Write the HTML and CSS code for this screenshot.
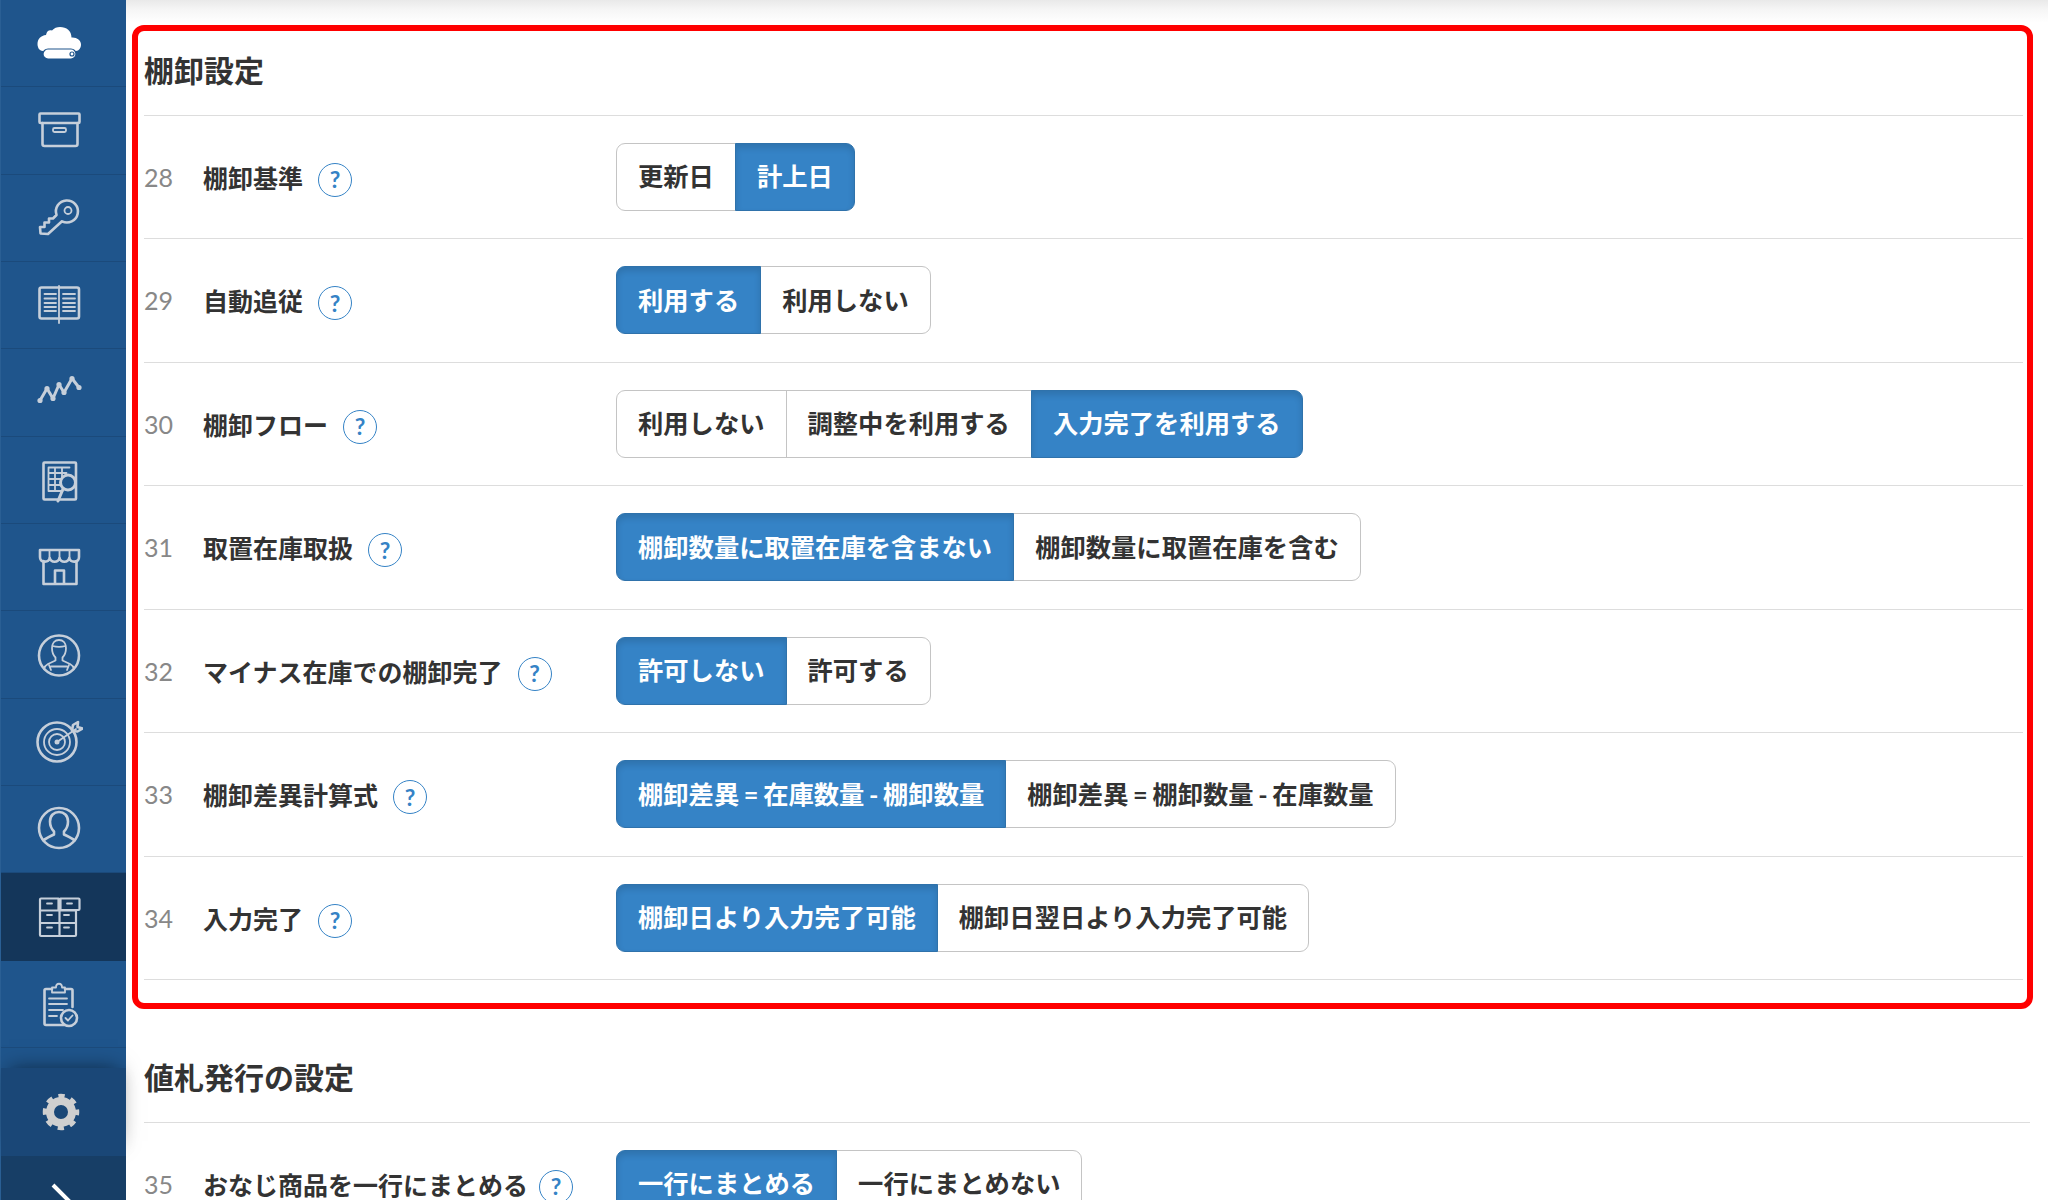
FILE: index.html
```html
<!DOCTYPE html>
<html lang="ja">
<head>
<meta charset="utf-8">
<title>棚卸設定</title>
<link rel="stylesheet" href="styles.css">
</head>
<body>
<div class="app">
  <aside class="sidebar">
    <nav class="nav">
      <a class="nav-item">
        <svg class="ico ico-solid" viewBox="0 0 48 48"><path d="M8 32C4 32 2.500 28 2.500 25c0-5 3.500-8.500 8.500-9 1-4.500 3-5 6-4.500 2-2.500 5-3.500 8-3.500 6.500 0 11.500 4 11.500 10.500 5-.5 9.500 2.500 9.500 7 0 3.500-2 6.500-5 6.500z"/><rect x="8" y="30" width="33" height="10" rx="5" class="pill"/><circle cx="37" cy="35" r="2" class="hole"/></svg>
      </a>
      <a class="nav-item">
        <svg class="ico" viewBox="0 0 48 48"><rect x="4.500" y="6.500" width="40" height="9.500" rx="1"/><path d="M7.500 16v21a2 2 0 0 0 2 2h31a2 2 0 0 0 2-2V16"/><rect x="18" y="21" width="13" height="4" rx="1.500" class="thin"/></svg>
      </a>
      <a class="nav-item">
        <svg class="ico" viewBox="0 0 48 48"><path d="M21.500 21A11 11 0 1 1 27 27.300L13 40l-7.500-.5L5 33h4.500v-4.500H14v-4h4z"/><circle cx="33" cy="16.500" r="3.500" class="thin"/></svg>
      </a>
      <a class="nav-item">
        <svg class="ico" viewBox="0 0 48 48"><rect x="4.500" y="6.500" width="39.500" height="31" rx="2"/><path d="M24 5v37" class="thin"/><path d="M9.500 13H21M9.500 17.500H21M9.500 22H21M9.500 26H21M9.500 30H21M28 13h12M28 17.500h12M28 22h12M28 26h12M28 30h12" class="thin"/></svg>
      </a>
      <a class="nav-item">
        <svg class="ico" viewBox="0 0 48 48"><path d="M5 31.500 12 19.500 18 29.500 24 15.500 29 23.500 37 9.500 44 18.500" class="heavy"/><g class="dots"><circle cx="5" cy="31.500" r="2.600"/><circle cx="12" cy="19.500" r="2.600"/><circle cx="18" cy="29.500" r="2.600"/><circle cx="24" cy="15.500" r="2.600"/><circle cx="29" cy="23.500" r="2.600"/><circle cx="37" cy="9.500" r="2.600"/><circle cx="44" cy="18.500" r="2.600"/></g></svg>
      </a>
      <a class="nav-item">
        <svg class="ico" viewBox="0 0 48 48"><rect x="8.500" y="6.500" width="32.500" height="37" rx="1"/><path d="M13.500 11.500h21M13.500 17h18M13.500 23h14M13.500 29h12M13.500 35h14M13.500 11.500V35M20 11.500V35M27 11.500v12" class="thin"/><circle cx="33" cy="26.500" r="7.500" class="mask heavy"/><path d="M28 33l-5 12" class="heavy"/></svg>
      </a>
      <a class="nav-item">
        <svg class="ico" viewBox="0 0 48 48"><path d="M8.500 18v23h33V18"/><path d="M5 7h39v7c0 6-8.500 6-9.750 1-1.250 5-8.500 5-9.750 0-1.250 5-8.500 5-9.750 0-1.250 5-9.750 5-9.750-1z"/><path d="M14.500 7v8M24.500 7v8M34.500 7v8" class="thin"/><path d="M20 40V27.500h9V40"/></svg>
      </a>
      <a class="nav-item">
        <svg class="ico" viewBox="0 0 48 48"><circle cx="24" cy="24.500" r="20"/><path d="M17 17c0-5 3-8 7-8s7 3 7 8c0 4-2 8-3.500 9.500v3l7.500 3.500c2 1 3.500 3 4 5M17 17c0 4 2 8 3.500 9.500v3L13 33c-2 1-3.500 3-4 5" class="thin"/><path d="M17.500 15c4 1 9 1 13 0M14 34l2 5M34 34l-2 5M16 35.500h16" class="thin"/></svg>
      </a>
      <a class="nav-item">
        <svg class="ico" viewBox="0 0 48 48"><circle cx="22" cy="24" r="19.500"/><circle cx="22" cy="24" r="13" class="thin"/><circle cx="22" cy="24" r="8" class="thin"/><circle cx="22" cy="24" r="2.500" class="fill"/><path d="M22 24 41 11" class="thin"/><path d="M37 13l1-6 5-3-.5 5 5 1.500-5 3z"/></svg>
      </a>
      <a class="nav-item">
        <svg class="ico" viewBox="0 0 48 48"><circle cx="24" cy="23" r="20"/><path d="M8.500 35.500C11 33 15 31.500 19 29.500v-3c-2-2-4-5.500-4-10 0-6 4-9.500 9-9.500s9 3.500 9 9.500c0 4.500-2 8-4 10v3c4 2 8 3.500 10.500 6"/></svg>
      </a>
      <a class="nav-item is-active">
        <svg class="ico ico-fine" viewBox="0 0 48 48"><path d="M5 6.500a1 1 0 0 1 1-1h17.500v12H5zM25.500 5.500h18a1 1 0 0 1 1 1V16a1 1 0 0 1-1 1h-18zM5 17.500h19.500V30H5zM24.500 17.500H41V30H24.500zM5 30h19.500v13H6a1 1 0 0 1-1-1zM24.500 30H41v12a1 1 0 0 1-1 1H24.500z"/><path d="M12 10.500h5M32 10.500h5M12 22h5M29 22h5M12 34.500h5M29 34.500h5" class="thin"/></svg>
      </a>
      <a class="nav-item">
        <svg class="ico" viewBox="0 0 48 48"><path d="M17 9h-6a1.500 1.500 0 0 0-1.500 1.500v33a1.500 1.500 0 0 0 1.500 1.500h19M37.500 27V10.500A1.500 1.500 0 0 0 36 9h-6"/><path d="M17 12.500V7.500h4c0-5 6-5 6 0h3v5z" class="thin"/><path d="M14 18.500h18M14 24h18M14 30h14M14 36h8" class="thin"/><circle cx="34" cy="38" r="8" class="mask"/><path d="M30.500 38l2.500 2.500 4.500-5" class="thin"/></svg>
      </a>
    </nav>
    <div class="sidebar-gap"></div>
    <a class="side-foot">
      <svg class="gear" viewBox="0 0 48 48"><circle cx="26" cy="24" r="11"/><circle cx="26" cy="24" r="15.500" class="teeth"/></svg>
    </a>
    <a class="side-toggle">
      <svg class="chev" viewBox="0 0 48 54"><path d="M18 10 35 27 18 44"/></svg>
    </a>
  </aside>

  <main class="main">
    <div class="topshade"></div>

    <section class="panel panel-marked">
      <h2 class="panel-title">棚卸設定</h2>

      <div class="row">
        <span class="num">28</span>
        <div class="label">棚卸基準<span class="help">?</span></div>
        <div class="btns"><button class="btn">更新日</button><button class="btn on">計上日</button></div>
      </div>
      <div class="row">
        <span class="num">29</span>
        <div class="label">自動追従<span class="help">?</span></div>
        <div class="btns"><button class="btn on">利用する</button><button class="btn">利用しない</button></div>
      </div>
      <div class="row">
        <span class="num">30</span>
        <div class="label">棚卸フロー<span class="help">?</span></div>
        <div class="btns"><button class="btn">利用しない</button><button class="btn">調整中を利用する</button><button class="btn on">入力完了を利用する</button></div>
      </div>
      <div class="row">
        <span class="num">31</span>
        <div class="label">取置在庫取扱<span class="help">?</span></div>
        <div class="btns"><button class="btn on">棚卸数量に取置在庫を含まない</button><button class="btn">棚卸数量に取置在庫を含む</button></div>
      </div>
      <div class="row">
        <span class="num">32</span>
        <div class="label">マイナス在庫での棚卸完了<span class="help">?</span></div>
        <div class="btns"><button class="btn on">許可しない</button><button class="btn">許可する</button></div>
      </div>
      <div class="row">
        <span class="num">33</span>
        <div class="label">棚卸差異計算式<span class="help">?</span></div>
        <div class="btns"><button class="btn on tight">棚卸差異 = 在庫数量 - 棚卸数量</button><button class="btn tight">棚卸差異 = 棚卸数量 - 在庫数量</button></div>
      </div>
      <div class="row">
        <span class="num">34</span>
        <div class="label">入力完了<span class="help">?</span></div>
        <div class="btns"><button class="btn on">棚卸日より入力完了可能</button><button class="btn">棚卸日翌日より入力完了可能</button></div>
      </div>
    </section>

    <section class="panel panel-plain">
      <h2 class="panel-title">値札発行の設定</h2>
      <div class="row">
        <span class="num">35</span>
        <div class="label">おなじ商品を一行にまとめる<span class="help help-near">?</span></div>
        <div class="btns"><button class="btn on">一行にまとめる</button><button class="btn">一行にまとめない</button></div>
      </div>
    </section>
  </main>
</div>
</body>
</html>
```
FILE: styles.css
```css
* { box-sizing: border-box; }

html, body {
  margin: 0;
  height: 1200px;
  overflow: hidden;
  background: #fff;
}

body {
  font-family: Lato, "Noto Sans CJK JP", sans-serif;
  color: #333;
}

.app {
  display: flex;
  height: 1200px;
}

/* Sidebar */
.sidebar {
  position: relative;
  z-index: 1;
  flex: 0 0 126px;
  width: 126px;
  background: #1f558c;
  border-left: 1px solid #2a5f94;
}

.nav {
  display: flex;
  flex-direction: column;
}

.nav-item {
  display: flex;
  align-items: center;
  height: 87.35px;
  padding-left: 34px;
  border-bottom: 1px solid #1b4a7b;
}

.nav-item.is-active {
  background: #14365a;
  border-bottom-color: #14365a;
}

.ico {
  width: 48px;
  height: 48px;
  fill: none;
  stroke: #c6cfda;
  stroke-width: 2.6;
  stroke-linejoin: round;
  stroke-linecap: round;
}

.ico .thin { stroke-width: 1.8; }
.ico .heavy { stroke-width: 3; }
.ico .fill { fill: #c6cfda; stroke: none; }
.ico .dots { fill: #c6cfda; stroke: none; }
.ico .mask { fill: #1f558c; }

.ico-fine { stroke-width: 2.2; }

.ico-solid { fill: #fff; stroke: none; }
.ico-solid .pill { fill: #fff; stroke: #1f558c; stroke-width: 1.2; }
.ico-solid .hole { fill: #fff; stroke: #1f558c; stroke-width: 1.2; }

.sidebar-gap { height: 20px; }

.side-foot {
  display: flex;
  align-items: center;
  height: 88px;
  padding-left: 34px;
  background: #1a4777;
  box-shadow: 0 -7px 20px -8px rgba(0, 0, 0, .5), 6px 0 14px -4px rgba(0, 0, 0, .03);
}

.gear {
  width: 48px;
  height: 48px;
  fill: none;
  stroke: #cfcfcf;
  stroke-width: 8;
}

.gear .teeth {
  stroke-width: 5.5;
  stroke-dasharray: 6.09 6.09;
  stroke-dashoffset: 3.04;
}

.side-toggle {
  display: block;
  height: 86px;
  padding: 19px 0 0 34px;
  background: #173e66;
}

.chev {
  display: block;
  width: 48px;
  height: 54px;
  fill: none;
  stroke: #fff;
  stroke-width: 4;
}

/* Content */
.main {
  flex: 1;
  min-width: 0;
}

.topshade {
  height: 25px;
  background: linear-gradient(#e9e9e9, #f6f6f6 40%, #fff 90%);
}

.panel-marked {
  width: 1901px;
  margin-left: 6px;
  padding: 0 4px 22.500px 6px;
  border: 6px solid #f00;
  border-radius: 12px;
}

.panel-plain {
  width: 1886px;
  margin-left: 18px;
}

.panel-title {
  display: flex;
  align-items: center;
  height: 84.500px;
  margin: 0;
  padding-bottom: 8px;
  font-size: 30px;
  font-weight: 700;
  color: #333;
  border-bottom: 1px solid #ddd;
}

.panel-plain .panel-title {
  height: 114px;
  padding-top: 30px;
}

.row {
  display: flex;
  align-items: center;
  height: 123.5px;
  border-bottom: 1px solid #ddd;
}

.num {
  flex: 0 0 59px;
  font-size: 25px;
  color: #888;
}

.label {
  display: flex;
  align-items: center;
  flex: 0 0 413px;
  font-size: 25px;
  font-weight: 700;
  color: #333;
}

.help {
  display: inline-flex;
  align-items: center;
  justify-content: center;
  width: 34px;
  height: 34px;
  margin: 6px 0 0 15px;
  border: 1.3px solid #3583c6;
  border-radius: 50%;
  font-size: 23px;
  font-weight: 700;
  line-height: 1;
  color: #3583c6;
}

.help-near {
  margin-left: 11px;
}

.btns {
  display: flex;
}

.btn {
  height: 68px;
  margin: 0 0 0 -1px;
  padding: 0 21px;
  background: #fff;
  border: 1.3px solid #c4c4c4;
  font-family: inherit;
  font-size: 25.3px;
  font-weight: 700;
  line-height: 1;
  color: #333;
}

.btn.tight {
  word-spacing: -1.5px;
}

.btn:first-child {
  margin-left: 0;
  border-radius: 9px 0 0 9px;
}

.btn:last-child {
  border-radius: 0 9px 9px 0;
}

.btn.on {
  position: relative;
  background: #3583c6;
  border-color: #2f72ab;
  color: #fff;
  box-shadow: inset 0 4px 6px rgba(0, 0, 0, .125);
}
```
